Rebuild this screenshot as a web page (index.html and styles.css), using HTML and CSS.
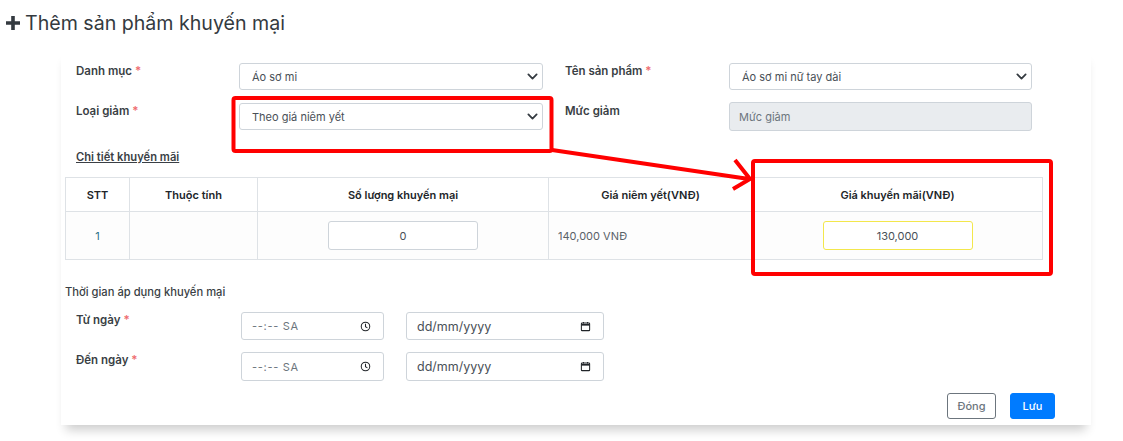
FILE: index.html
```html
<!DOCTYPE html>
<html lang="vi">
<head>
    <meta charset="UTF-8">
    <meta name="viewport" content="width=device-width, initial-scale=1.0">
    <title>Thêm sản phẩm khuyến mại</title>
    <link rel="stylesheet" href="styles.css">
</head>
<body>
    <h1 class="page-title">
        <svg class="plus" viewBox="0 0 14 14"><path d="M5.2 0h3.6v5.2H14v3.6H8.8V14H5.2V8.8H0V5.2h5.2z"/></svg>
        Thêm sản phẩm khuyến mại
    </h1>

    <form class="card">
        <div class="field-row">
            <label class="field-label">Danh mục <span class="req">*</span></label>
            <select class="control select"><option>Áo sơ mi</option></select>
            <label class="field-label">Tên sản phẩm <span class="req">*</span></label>
            <select class="control select"><option>Áo sơ mi nữ tay dài</option></select>
        </div>
        <div class="field-row">
            <label class="field-label">Loại giảm <span class="req">*</span></label>
            <select class="control select"><option>Theo giá niêm yết</option></select>
            <label class="field-label">Mức giảm</label>
            <input class="control disabled" placeholder="Mức giảm" disabled>
        </div>

        <p class="detail-title">Chi tiết khuyến mãi</p>

        <table class="promo-table">
            <thead>
                <tr>
                    <th class="col-stt">STT</th>
                    <th class="col-attr">Thuộc tính</th>
                    <th class="col-qty">Số lượng khuyến mại</th>
                    <th class="col-list">Giá niêm yết(VNĐ)</th>
                    <th>Giá khuyến mãi(VNĐ)</th>
                </tr>
            </thead>
            <tbody>
                <tr>
                    <td class="center link">1</td>
                    <td></td>
                    <td class="center"><input class="cell-input" value="0"></td>
                    <td>140,000 VNĐ</td>
                    <td class="center"><input class="cell-input warn" value="130,000"></td>
                </tr>
            </tbody>
        </table>

        <p class="time-title">Thời gian áp dụng khuyến mại</p>

        <div class="time-row">
            <label class="field-label">Từ ngày <span class="req">*</span></label>
            <div class="control time-box">
                <span class="time-text">--:-- SA</span>
                <svg class="ico" viewBox="0 0 16 16"><circle cx="8" cy="8" r="6.2"/><path d="M8 4v4.4l2.8 1.6"/></svg>
            </div>
            <div class="control date-box">
                <span>dd/mm/yyyy</span>
                <svg class="ico" viewBox="0 0 16 16"><rect x="2" y="3" width="12" height="11" rx="1"/><path class="thick" d="M2 5.5h12"/><path d="M5 1.5v2M11 1.5v2"/></svg>
            </div>
        </div>
        <div class="time-row">
            <label class="field-label">Đến ngày <span class="req">*</span></label>
            <div class="control time-box tall">
                <span class="time-text">--:-- SA</span>
                <svg class="ico" viewBox="0 0 16 16"><circle cx="8" cy="8" r="6.2"/><path d="M8 4v4.4l2.8 1.6"/></svg>
            </div>
            <div class="control date-box tall">
                <span>dd/mm/yyyy</span>
                <svg class="ico" viewBox="0 0 16 16"><rect x="2" y="3" width="12" height="11" rx="1"/><path class="thick" d="M2 5.5h12"/><path d="M5 1.5v2M11 1.5v2"/></svg>
            </div>
        </div>

        <div class="actions">
            <button type="button" class="btn btn-close">Đóng</button>
            <button type="submit" class="btn btn-save">Lưu</button>
        </div>
    </form>

    <svg class="annotations" width="1123" height="441" viewBox="0 0 1123 441">
        <rect x="233.5" y="98" width="318" height="53" rx="2"/>
        <rect x="753" y="161" width="298" height="113" rx="2"/>
        <path d="M552 150L749 179M735 160L750 179L733 189"/>
    </svg>
</body>
</html>
```

FILE: styles.css
```css
* {
    box-sizing: border-box;
}
body {
    margin: 0;
    height: 441px;
    overflow: hidden;
    background-color: #fff;
    font-family: Inter, "Noto Sans", sans-serif;
    font-size: 11px;
    color: #3a3f45;
}
.page-title {
    display: flex;
    align-items: flex-start;
    gap: 5px;
    margin: 0;
    padding: 11px 0 0 6px;
    height: 48px;
    font-size: 19.6px;
    font-weight: 400;
    line-height: 24px;
    color: #343a40;
}
.plus {
    width: 14px;
    height: 14px;
    margin-top: 5px;
    fill: #343a40;
}
.card {
    width: 1030px;
    height: 377px;
    margin-left: 61px;
    padding: 15px 0 0 4px;
    background-color: #fff;
    box-shadow: 0 10px 10px -5px rgba(0, 0, 0, 0.2);
}
.field-row {
    display: grid;
    grid-template-columns: 163px 304px 186px 303px;
    padding-left: 11px;
    height: 40px;
}
.field-row > .field-label:nth-child(3) {
    margin-left: 22px;
}
.field-label {
    padding-top: 1px;
    font-weight: 600;
    font-size: 11.5px;
    line-height: 14px;
    color: #3a3f45;
}
.req {
    color: #ee6b6e;
}
.control {
    height: 27px;
    border: 1px solid #ced4da;
    border-radius: 3px;
    background-color: #fff;
    font-family: inherit;
    font-size: 11px;
    color: #495057;
}
.select {
    appearance: none;
    padding: 0 12px;
    background-image: url("data:image/svg+xml,%3csvg xmlns='http://www.w3.org/2000/svg' viewBox='0 0 16 16'%3e%3cpath fill='none' stroke='%23343a40' stroke-linecap='round' stroke-linejoin='round' stroke-width='2.6' d='M2 5l6 6 6-6'/%3e%3c/svg%3e");
    background-repeat: no-repeat;
    background-position: right 3px center;
    background-size: 13px 11px;
}
.disabled {
    height: 29px;
    margin-top: -1px;
    padding: 0 9px;
    background-color: #e9ecef;
}
.disabled::placeholder {
    color: #6c757d;
    opacity: 1;
}
.detail-title {
    margin: 7px 0 0 11px;
    height: 27px;
    font-weight: 600;
    font-size: 11.2px;
    line-height: 14px;
    text-decoration: underline;
}
.promo-table {
    width: 978px;
    table-layout: fixed;
    border-collapse: collapse;
    font-size: 11px;
}
.promo-table th, .promo-table td {
    border: 1px solid #dee2e6;
    padding: 0 9px;
}
.promo-table th {
    height: 34px;
    font-weight: 600;
    color: #212529;
    text-align: center;
}
.promo-table td {
    height: 48px;
    background-color: #fdfdfd;
    color: #5a6168;
}
.col-stt { width: 64px; }
.col-attr { width: 128px; }
.col-qty { width: 291px; }
.col-list { width: 204px; }
.promo-table .center { text-align: center; }
.promo-table .link { color: #2a6f86; }
.cell-input {
    display: block;
    margin: 0 auto;
    width: 150px;
    height: 29px;
    border: 1px solid #ced4da;
    border-radius: 3px;
    background-color: #fff;
    font-family: inherit;
    font-size: 11px;
    text-align: center;
    color: #495057;
}
.warn {
    border-color: #f3e74c;
}
.time-title {
    margin: 25px 0 0;
    height: 27px;
    font-weight: 500;
    font-size: 11.2px;
    line-height: 14px;
}
.time-row {
    display: flex;
    height: 40px;
    padding-left: 11px;
}
.time-row .field-label {
    width: 165px;
}
.time-box, .date-box {
    display: flex;
    align-items: center;
    justify-content: space-between;
    height: 28px;
    padding: 0 12px 0 10px;
}
.tall {
    height: 29px;
}
.time-box {
    width: 143px;
    margin-right: 22px;
}
.date-box {
    width: 198px;
    font-size: 12.5px;
}
.time-text {
    letter-spacing: 0.7px;
    color: #6c757d;
}
.ico {
    width: 11px;
    height: 11px;
    fill: none;
    stroke: #212529;
    stroke-width: 1.5;
}
.ico .thick {
    stroke-width: 2.5;
}
.actions {
    display: flex;
    justify-content: flex-end;
    gap: 14px;
    width: 990px;
    margin-top: 1px;
}
.btn {
    height: 26px;
    border-radius: 3px;
    font-family: inherit;
    font-size: 11px;
    font-weight: 500;
    cursor: pointer;
}
.btn-close {
    width: 49px;
    border: 1px solid #6c757d;
    background-color: #fff;
    color: #6c757d;
}
.btn-save {
    width: 45px;
    border: 1px solid #007bff;
    background-color: #007bff;
    color: #fff;
}
.annotations {
    position: absolute;
    left: 0;
    top: 0;
    fill: none;
    stroke: #f00;
    stroke-width: 4;
}
```
